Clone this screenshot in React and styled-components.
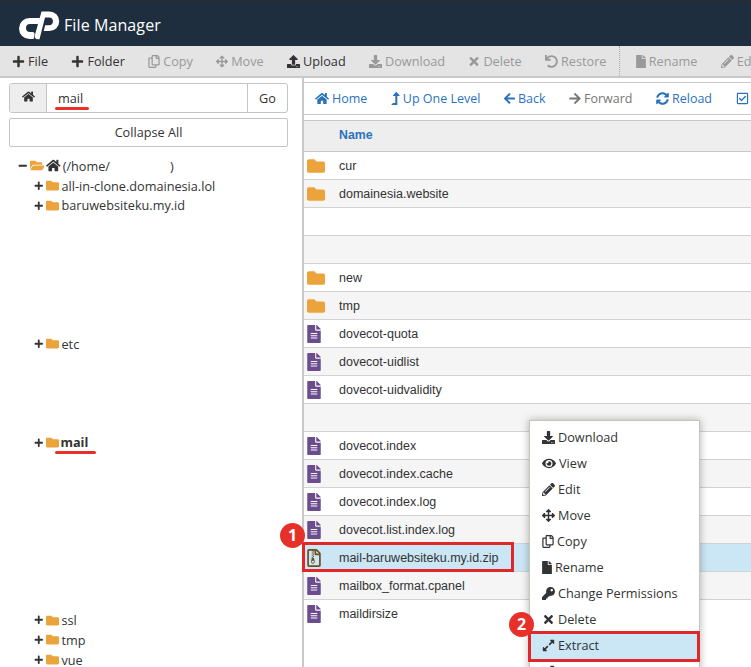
import React from "react";
import styled, { createGlobalStyle } from "styled-components";
import {
  FaArrowLeft,
  FaArrowRight,
  FaArrowsAlt,
  FaDownload,
  FaExpandAlt,
  FaEye,
  FaFile,
  FaFileAlt,
  FaFolder,
  FaFolderOpen,
  FaHome,
  FaKey,
  FaLevelUpAlt,
  FaMinus,
  FaPencilAlt,
  FaPlus,
  FaRegCheckSquare,
  FaRegCopy,
  FaRegFileArchive,
  FaSyncAlt,
  FaTimes,
  FaUndo,
  FaUpload,
} from "react-icons/fa";

// w is the room the icon takes, they are not all square
const toolbarItems = [
  { icon: FaPlus, label: "File", w: 13, on: true },
  { icon: FaPlus, label: "Folder", w: 13, on: true },
  { icon: FaRegCopy, label: "Copy", w: 12 },
  { icon: FaArrowsAlt, label: "Move", w: 12 },
  { icon: FaUpload, label: "Upload", w: 13, on: true },
  { icon: FaDownload, label: "Download", w: 13 },
  { icon: FaTimes, label: "Delete", w: 12 },
  { icon: FaUndo, label: "Restore", w: 13 },
  { icon: FaFile, label: "Rename", w: 10, split: true },
  { icon: FaPencilAlt, label: "Edit", w: 13 },
];

const navItems = [
  { icon: FaHome, label: "Home", w: 14 },
  { icon: FaLevelUpAlt, label: "Up One Level", w: 9 },
  { icon: FaArrowLeft, label: "Back", w: 11 },
  { icon: FaArrowRight, label: "Forward", w: 12, off: true },
  { icon: FaSyncAlt, label: "Reload", w: 13 },
  { icon: FaRegCheckSquare, label: "Select All", w: 13 },
];

// empty rows are the parts blanked out in the screenshot
const treeRows = [
  { label: "all-in-clone.domainesia.lol" },
  { label: "baruwebsiteku.my.id" },
  {}, {}, {}, {}, {}, {},
  { label: "etc" },
  {}, {}, {}, {},
  { label: "mail", current: true },
  {}, {}, {}, {}, {}, {}, {}, {},
  { label: "ssl" },
  { label: "tmp" },
  { label: "vue" },
];

const files = [
  { name: "cur", type: "folder" },
  { name: "domainesia.website", type: "folder" },
  {},
  {},
  { name: "new", type: "folder" },
  { name: "tmp", type: "folder" },
  { name: "dovecot-quota", type: "file" },
  { name: "dovecot-uidlist", type: "file" },
  { name: "dovecot-uidvalidity", type: "file" },
  {},
  { name: "dovecot.index", type: "file" },
  { name: "dovecot.index.cache", type: "file" },
  { name: "dovecot.index.log", type: "file" },
  { name: "dovecot.list.index.log", type: "file" },
  { name: "mail-baruwebsiteku.my.id.zip", type: "zip", selected: true },
  { name: "mailbox_format.cpanel", type: "file" },
  { name: "maildirsize", type: "file" },
];

const menuItems = [
  { icon: FaDownload, label: "Download", w: 13 },
  { icon: FaEye, label: "View", w: 14 },
  { icon: FaPencilAlt, label: "Edit", w: 13 },
  { icon: FaArrowsAlt, label: "Move", w: 13 },
  { icon: FaRegCopy, label: "Copy", w: 12 },
  { icon: FaFile, label: "Rename", w: 10 },
  { icon: FaKey, label: "Change Permissions", w: 13 },
  { icon: FaTimes, label: "Delete", w: 13 },
  { icon: FaExpandAlt, label: "Extract", w: 13, active: true },
  { icon: FaExpandAlt, label: "Compress", w: 13 },
];

function CpanelLogo() {
  return (
    <svg width="41" height="29" viewBox="0 0 41 29" fill="#fff">
      <path d="M10.5 7H21L19.4 13H11a4 4 0 0 0 0 8h2.5c1.5 0 2.5 1.3 2 2.7L14.6 28H10.5a10.5 10.5 0 0 1 0-21z" />
      <path d="M22.5 0.5H30.5a9.75 9.75 0 0 1 0 19.5h-5.8l1.5-5.8H30a3.9 3.9 0 0 0 0-7.8h-4L20.5 28.3H19c-2.4 0-3.8-1.7-3.2-3.8z" />
    </svg>
  );
}

function FileIcon({ type }) {
  if (type === "folder") return <FolderGlyph />;
  if (type === "zip") return <ZipGlyph />;
  return <DocGlyph />;
}

function App() {
  return (
    <Page>
      <GlobalStyle />
      <Header>
        <CpanelLogo />
        <Title>File Manager</Title>
      </Header>
      <Toolbar>
        {toolbarItems.map(({ icon: Icon, label, w, on, split }) => (
          <ToolButton key={label} $w={w} $on={on} $split={split}>
            <Icon />
            {label}
          </ToolButton>
        ))}
      </Toolbar>
      <Main>
        <Sidebar>
          <PathForm>
            <PathHome>
              <FaHome />
            </PathHome>
            <PathInput>
              mail
              <Underline $width={34} $left={8} $top={23} />
            </PathInput>
            <GoButton>Go</GoButton>
          </PathForm>
          <CollapseButton>Collapse All</CollapseButton>
          <Tree>
            <TreeRow $root>
              <FaMinus className="toggle" />
              <FaFolderOpen className="folder" />
              <FaHome className="home" />
              <span>(/home/</span>
              <Redacted />
              <span>)</span>
            </TreeRow>
            {treeRows.map((row, i) => (
              <TreeRow key={i}>
                {row.label && (
                  <>
                    <FaPlus className="toggle" />
                    <FaFolder className="folder" />
                    <TreeLabel $current={row.current}>
                      {row.label}
                      {row.current && <Underline $width={41} $left={-6} $top={18} />}
                    </TreeLabel>
                  </>
                )}
              </TreeRow>
            ))}
          </Tree>
        </Sidebar>
        <Content>
          <NavBar>
            {navItems.map(({ icon: Icon, label, w, off }) => (
              <NavButton key={label} $w={w} $off={off}>
                <Icon />
                {label}
              </NavButton>
            ))}
          </NavBar>
          <Table>
            <TableHead>Name</TableHead>
            {files.map((file, i) => (
              <FileRow key={i} $even={i % 2 === 1} $selected={file.selected}>
                {file.type && <FileIcon type={file.type} />}
                <FileName>{file.name}</FileName>
                {file.selected && (
                  <>
                    <Highlight />
                    <Badge $left={-24} $top={-21}>1</Badge>
                  </>
                )}
              </FileRow>
            ))}
          </Table>
          <ContextMenu>
            {menuItems.map(({ icon: Icon, label, w, active }) => (
              <MenuItem key={label} $w={w} $active={active}>
                <Icon />
                {label}
                {active && <Badge $left={-21} $top={-20}>2</Badge>}
              </MenuItem>
            ))}
          </ContextMenu>
        </Content>
      </Main>
    </Page>
  );
}

const GlobalStyle = createGlobalStyle`
  html, body {
    margin: 0;
    height: 100%;
    overflow: hidden;
    background: #fff;
  }
`;

const Page = styled.div`
  width: 751px;
  height: 667px;
  overflow: hidden;
  font-family: "Open Sans", sans-serif;
  font-size: 12.7px;
  color: #333;
`;

const Header = styled.header`
  height: 46px;
  box-sizing: border-box;
  border-top: 1px solid #2b2b30;
  padding: 3px 0 0 19px;
  background: #1f2e3e;
  display: flex;
  align-items: center;
  gap: 4px;
`;

const Title = styled.div`
  color: #fff;
  font-size: 16px;
  letter-spacing: 0.1px;
`;

const Toolbar = styled.div`
  height: 32px;
  box-sizing: border-box;
  border-bottom: 2px solid #c8c8c8;
  background: #e4e4e4;
  padding-left: 12px;
  display: flex;
  align-items: center;
  white-space: nowrap;
  overflow: hidden;
`;

const ToolButton = styled.div`
  display: flex;
  align-items: center;
  gap: 3px;
  height: 30px;
  margin-right: 23.3px;
  color: ${(p) => (p.$on ? "#333" : "#999")};
  ${(p) => p.$split && "border-left: 1px dotted #aaa; padding-left: 16px; margin-left: -11px;"}
  svg {
    width: ${(p) => p.$w}px;
    height: 13px;
    flex-shrink: 0;
  }
`;

const Main = styled.div`
  display: grid;
  grid-template-columns: 302px 1fr;
`;

const Sidebar = styled.aside`
  padding: 5px 14px 0 9px;
`;

const PathForm = styled.div`
  display: flex;
  height: 30px;
  box-sizing: border-box;
  border: 1px solid #c4c4c4;
  border-radius: 3px;
  overflow: hidden;
`;

const PathHome = styled.div`
  width: 36px;
  background: #eee;
  border-right: 1px solid #c4c4c4;
  display: flex;
  align-items: center;
  justify-content: center;
  padding-bottom: 3px;
  font-size: 13px;
`;

const PathInput = styled.div`
  position: relative;
  flex: 1;
  padding-left: 11px;
  line-height: 28px;
`;

const GoButton = styled.div`
  width: 39px;
  border-left: 1px solid #c4c4c4;
  text-align: center;
  line-height: 28px;
`;

const Underline = styled.i`
  position: absolute;
  left: ${(p) => p.$left}px;
  top: ${(p) => p.$top}px;
  width: ${(p) => p.$width}px;
  height: 3px;
  border-radius: 2px;
  background: #e8302a;
`;

const CollapseButton = styled.div`
  margin-top: 5px;
  height: 29px;
  box-sizing: border-box;
  border: 1px solid #c4c4c4;
  border-radius: 2px;
  text-align: center;
  line-height: 26px;
`;

const Tree = styled.div`
  margin-top: 9px;
  color: #333;
`;

const TreeRow = styled.div`
  height: 19.76px;
  display: flex;
  align-items: center;
  padding-left: ${(p) => (p.$root ? "9px" : "25px")};
  white-space: nowrap;
  .toggle {
    font-size: 9.5px;
    margin-right: 2px;
    color: #333;
  }
  .folder {
    width: ${(p) => (p.$root ? "14.6px" : "13px")};
    height: 13px;
    color: #eba33c;
    margin-right: ${(p) => (p.$root ? "2px" : "3px")};
  }
  .home {
    width: 14.6px;
    height: 13px;
    margin-right: 2px;
  }
`;

const Redacted = styled.span`
  width: 60px;
`;

const TreeLabel = styled.span`
  position: relative;
  ${(p) => p.$current && "font-weight: 700; margin-left: -1px;"}
`;

const Content = styled.section`
  position: relative;
  height: 589px;
  border-left: 2px solid #c8c8c8;
`;

const NavBar = styled.div`
  margin-top: 4px;
  height: 33px;
  box-sizing: border-box;
  border-top: 1px solid #c8c8c8;
  border-bottom: 1px solid #c8c8c8;
  padding: 0 0 1px 11px;
  display: flex;
  align-items: center;
  gap: 23.5px;
  font-size: 12.5px;
  white-space: nowrap;
  overflow: hidden;
`;

const NavButton = styled.div`
  display: flex;
  align-items: center;
  gap: 3px;
  color: ${(p) => (p.$off ? "#777" : "#2b72bd")};
  svg {
    width: ${(p) => p.$w}px;
    height: 13px;
    flex-shrink: 0;
  }
`;

const Table = styled.div`
  margin-top: 5px;
  border-top: 1px solid #c8c8c8;
`;

const TableHead = styled.div`
  height: 31px;
  box-sizing: border-box;
  background: #eee;
  border-bottom: 1px solid #c8c8c8;
  padding-left: 35px;
  line-height: 29px;
  font-family: "Liberation Sans", Arial, sans-serif;
  font-size: 12.3px;
  font-weight: 700;
  color: #2b72bd;
`;

const FileRow = styled.div`
  position: relative;
  height: 28px;
  box-sizing: border-box;
  border-bottom: 1px solid #d2d2d2;
  display: flex;
  align-items: center;
  padding-left: 3px;
  background: ${(p) => (p.$selected ? "#cbe6f5" : p.$even ? "#f5f5f5" : "#fff")};
  &:last-child {
    border-bottom: 0;
  }
`;

const FolderGlyph = styled(FaFolder)`
  font-size: 18px;
  width: 18px;
  color: #eba33c;
`;

const DocGlyph = styled(FaFileAlt)`
  font-size: 18px;
  width: 14px;
  margin-right: 4px;
  color: #6b4d8f;
`;

const ZipGlyph = styled(FaRegFileArchive)`
  font-size: 18px;
  width: 14px;
  margin-right: 4px;
  color: #6d4f24;
`;

const FileName = styled.div`
  margin-left: 14px;
  font-family: "Liberation Sans", Arial, sans-serif;
  font-size: 12.5px;
  color: #333;
`;

const Highlight = styled.div`
  position: absolute;
  left: -2px;
  top: -2px;
  width: 212px;
  height: 30px;
  box-sizing: border-box;
  border: 3px solid #e0282a;
`;

const Badge = styled.div`
  position: absolute;
  left: ${(p) => p.$left}px;
  top: ${(p) => p.$top}px;
  width: 25px;
  height: 25px;
  border-radius: 50%;
  background: #e8302a;
  color: #fff;
  font-family: "Open Sans", sans-serif;
  font-size: 16px;
  font-weight: 700;
  line-height: 25px;
  text-align: center;
`;

const ContextMenu = styled.div`
  position: absolute;
  z-index: 1;
  left: 225px;
  top: 342px;
  width: 171px;
  box-sizing: border-box;
  padding-top: 3px;
  background: #fff;
  border: 1px solid #c6c6b8;
  box-shadow: 0 0 8px rgba(0, 0, 0, 0.3);
`;

const MenuItem = styled.div`
  position: relative;
  height: 26px;
  box-sizing: border-box;
  display: flex;
  align-items: center;
  gap: 3px;
  padding-left: 12px;
  color: #333;
  svg {
    width: ${(p) => p.$w}px;
    height: 13px;
  }
  ${(p) =>
    p.$active &&
    `&::before {
      content: "";
      position: absolute;
      z-index: -1;
      left: -2px;
      right: -1px;
      top: -1px;
      height: 31px;
      box-sizing: border-box;
      background: #cbe6f5;
      border: 3px solid #e0282a;
    }`}
`;

export default App;
